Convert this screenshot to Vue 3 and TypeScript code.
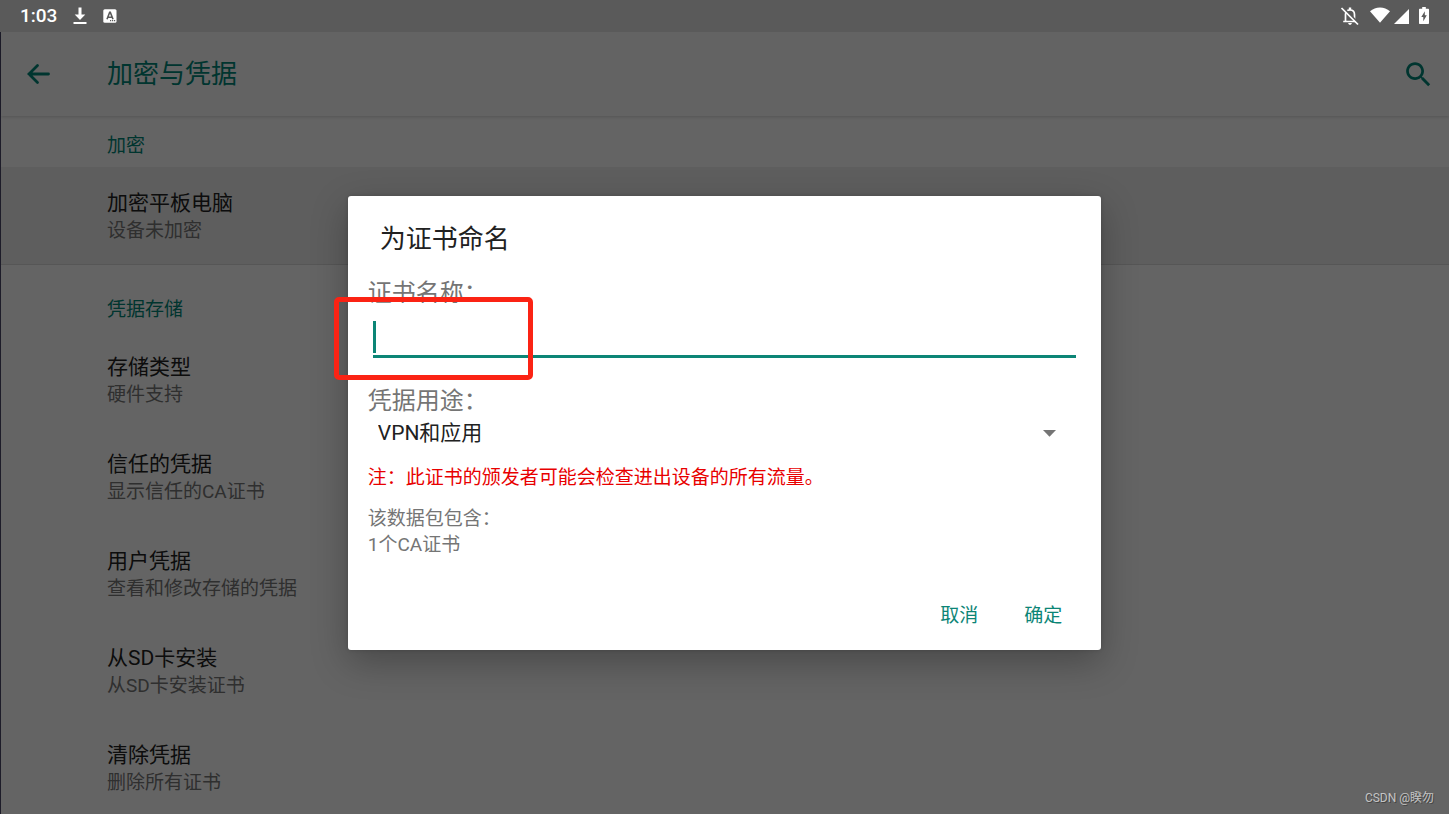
<script setup lang="ts">
import { ref } from 'vue'

interface Entry {
  title: string
  summary: string
}

const entries: Entry[] = [
  { title: '存储类型', summary: '硬件支持' },
  { title: '信任的凭据', summary: '显示信任的CA证书' },
  { title: '用户凭据', summary: '查看和修改存储的凭据' },
  { title: '从SD卡安装', summary: '从SD卡安装证书' },
  { title: '清除凭据', summary: '删除所有证书' },
]

const certName = ref('')
const usage = ref('vpn')
</script>

<template>
  <div class="screen">
    <header class="status">
      <div class="status-group">
        <span class="clock">1:03</span>
        <svg class="download" width="14" height="18" viewBox="0 0 14 18" aria-hidden="true">
          <path d="M5.5 0.5h3v7h3.8L7 13 1.7 7.5h3.8z" fill="#fff" />
          <path d="M0.5 15h13v2h-13z" fill="#fff" />
        </svg>
        <svg class="app-badge" width="14" height="14" viewBox="0 0 14 14" aria-hidden="true">
          <rect x="0.3" y="0.3" width="13.2" height="13.4" rx="1.5" fill="#fff" />
          <path d="M4 10.3L6.7 3.3h0.6L10 10.3M5 8.2h4" fill="none" stroke="#5a5a5a" stroke-width="1.6" />
          <path d="M7 11.7h1.2M9 11.7h1.2M11 11.7h1.2" stroke="#5a5a5a" stroke-width="1.2" />
        </svg>
      </div>
      <div class="status-group">
        <svg width="20" height="20" viewBox="0 0 20 20" aria-hidden="true">
          <path d="M5.5 15V8.5C5.5 5.8 7.3 4 10 4s4.5 1.8 4.5 4.5V15M3.2 15.5h13.6" fill="none" stroke="#fff" stroke-width="1.7" />
          <path d="M8.8 1.6h2.4v2.5H8.8zM8.2 17h3.6c0 1-.8 1.8-1.8 1.8S8.2 18 8.2 17z" fill="#fff" />
          <path d="M2.6 1.2L19 17.6" stroke="#5a5a5a" stroke-width="2" />
          <path d="M1.5 2L18 18.5" stroke="#fff" stroke-width="1.7" />
        </svg>
        <svg class="wifi" width="20" height="18" viewBox="0 0 20 18" aria-hidden="true">
          <path d="M0 4.2C2.8 1.7 6.3 0.4 10 0.4s7.2 1.3 10 3.8L10 15.8z" fill="#fff" />
        </svg>
        <svg class="signal" width="15" height="15" viewBox="0 0 15 15" aria-hidden="true">
          <path d="M15 0v15H0z" fill="#fff" />
        </svg>
        <svg class="battery" width="10" height="18" viewBox="0 0 10 18" aria-hidden="true">
          <path d="M3.2 0h3.6v1.7H9c.6 0 1 .4 1 1V16c0 .6-.4 1-1 1H1c-.6 0-1-.4-1-1V2.7c0-.6.4-1 1-1h2.2z" fill="#fff" />
          <path d="M5.8 4.3v4h2L4.3 14.2V10H2.3z" fill="#5a5a5a" />
        </svg>
      </div>
    </header>

    <main class="settings">
      <div class="appbar">
        <button class="icon-button back" type="button" aria-label="返回">
          <svg width="26" height="24" viewBox="0 0 26 24" aria-hidden="true">
            <path d="M23.5 12H4M12.5 3.5L4 12l8.5 8.5" fill="none" stroke="currentColor" stroke-width="2.8" stroke-linecap="round" />
          </svg>
        </button>
        <h1>加密与凭据</h1>
        <button class="icon-button" type="button" aria-label="搜索">
          <svg width="33" height="33" viewBox="0 0 24 24" aria-hidden="true">
            <path fill="currentColor" d="M15.5 14h-.79l-.28-.27C15.41 12.59 16 11.11 16 9.5 16 5.91 13.09 3 9.5 3S3 5.91 3 9.5 5.91 16 9.5 16c1.61 0 3.09-.59 4.23-1.57l.27.28v.79l5 4.99L20.49 19l-4.99-5zm-6 0C7.01 14 5 11.99 5 9.5S7.01 5 9.5 5 14 7.01 14 9.5 11.99 14 9.5 14z" />
          </svg>
        </button>
      </div>

      <section>
        <h2>加密</h2>
        <div class="row active">
          <div class="row-title">加密平板电脑</div>
          <div class="row-summary">设备未加密</div>
        </div>
      </section>
      <section class="storage">
        <h2>凭据存储</h2>
        <div v-for="entry in entries" :key="entry.title" class="row">
          <div class="row-title">{{ entry.title }}</div>
          <div class="row-summary">{{ entry.summary }}</div>
        </div>
      </section>
    </main>

    <div class="scrim">
      <form class="dialog" role="dialog" aria-labelledby="dialog-title" @submit.prevent>
        <h3 id="dialog-title">为证书命名</h3>
        <label class="label name-label" for="cert-name">证书名称：</label>
        <div class="field">
          <input id="cert-name" v-model="certName" type="text" autocomplete="off" />
          <span class="caret"></span>
          <span class="marker"></span>
        </div>
        <label class="label usage-label" for="cert-usage">凭据用途：</label>
        <div class="picker">
          <select id="cert-usage" v-model="usage">
            <option value="vpn">VPN和应用</option>
            <option value="wlan">WLAN</option>
          </select>
          <svg width="13" height="7" viewBox="0 0 13 7" aria-hidden="true">
            <path d="M0 0h13L6.5 6.8z" fill="#757575" />
          </svg>
        </div>
        <p class="warning">注：此证书的颁发者可能会检查进出设备的所有流量。</p>
        <p class="contents">该数据包包含：<br />1个CA证书</p>
        <div class="actions">
          <button type="button">取消</button>
          <button type="submit">确定</button>
        </div>
      </form>
    </div>

    <div class="watermark">CSDN @睽勿</div>
  </div>
</template>

<style>
body {
  margin: 0;
  overflow: hidden;
}
</style>

<style scoped>
.screen {
  position: relative;
  box-sizing: border-box;
  height: 100vh;
  overflow: hidden;
  display: flex;
  flex-direction: column;
  background: #fafafa;
  font-family: Roboto, "Noto Sans CJK SC", sans-serif;
  color: #212121;
}
.screen * {
  box-sizing: border-box;
}
h1,
h2,
h3,
p {
  margin: 0;
  font-weight: 400;
}
button,
input,
select {
  font: inherit;
  border: 0;
  background: none;
  outline: none;
}
svg {
  display: block;
  flex: none;
}

.status {
  position: relative;
  z-index: 2;
  flex: none;
  display: flex;
  justify-content: space-between;
  height: 32px;
  padding: 0 20px;
  background: #5a5a5a;
  color: #fff;
}
.status-group {
  display: flex;
  align-items: center;
}
.clock {
  font-size: 19px;
  line-height: 32px;
  font-weight: 500;
}
.download,
.app-badge {
  margin-left: 16px;
}
.wifi {
  margin-left: 10px;
}
.signal {
  margin-left: 4px;
}
.battery {
  margin-left: 10px;
}

.settings {
  flex: 1;
  min-height: 0;
  border-left: 1px solid #4a4868;
}
.appbar {
  position: relative;
  display: flex;
  align-items: center;
  height: 84px;
  margin-bottom: 1px;
  padding: 0 14px 0 24px;
  color: #008577;
  background: #f7f7f7;
  box-shadow: 0 1px 3px rgba(0, 0, 0, 0.16);
}
.icon-button {
  padding: 0;
  color: inherit;
}
.back {
  width: 82px;
}
.appbar h1 {
  flex: 1;
  font-size: 26px;
  line-height: 36px;
}
h2 {
  padding: 15px 20px 7px 106px;
  font-size: 19px;
  line-height: 28px;
  color: #008577;
}
.storage h2 {
  padding-top: 31px;
}
.row {
  padding: 22px 20px 19px 106px;
}
.row.active {
  background: #ebebeb;
  border-bottom: 1px solid #d6d6d6;
}
.row-title {
  font-size: 21px;
  line-height: 28px;
}
.row-summary {
  font-size: 19px;
  line-height: 28px;
  color: #757575;
}

.scrim {
  position: absolute;
  inset: 0;
  padding-top: 32px;
  display: flex;
  align-items: center;
  justify-content: center;
  background: rgba(0, 0, 0, 0.6);
}
.dialog {
  width: 52%;
  padding: 25px 25px 19px 20px;
  border-radius: 3px;
  background: #fff;
  box-shadow: 0 12px 36px rgba(0, 0, 0, 0.28), 0 0 4px rgba(0, 0, 0, 0.15);
}
.dialog h3 {
  padding-left: 12px;
  font-size: 26px;
  line-height: 36px;
}
.label {
  display: block;
  font-size: 24px;
  line-height: 32px;
  color: #757575;
}
.name-label {
  margin-top: 20px;
}
.field {
  position: relative;
  margin: -6px 0 0 5px;
  background: #fff;
}
.field input {
  display: block;
  width: 100%;
  height: 55px;
  padding: 0 6px;
  font-size: 24px;
  caret-color: transparent;
  border-bottom: 3px solid #0c8576;
}
.caret {
  position: absolute;
  left: 0;
  top: 18px;
  width: 3px;
  height: 32px;
  background: #0c8576;
}
.marker {
  position: absolute;
  left: -39px;
  top: -6px;
  width: 199px;
  height: 83px;
  border: 5px solid #fb2314;
  border-radius: 5px;
  pointer-events: none;
}
.usage-label {
  margin-top: 27px;
}
.picker {
  display: grid;
  align-items: center;
}
.picker select,
.picker svg {
  grid-area: 1 / 1;
}
.picker select {
  appearance: none;
  width: 100%;
  height: 32px;
  padding: 0 10px;
  font-size: 21px;
  color: #212121;
}
.picker svg {
  justify-self: end;
  margin-right: 20px;
  pointer-events: none;
}
.warning {
  margin-top: 15px;
  font-size: 19px;
  line-height: 28px;
  color: #e80000;
}
.contents {
  margin-top: 14px;
  font-size: 19px;
  line-height: 26px;
  color: #757575;
}
.actions {
  display: flex;
  justify-content: flex-end;
  gap: 22px;
  margin-top: 37px;
  padding-right: 2px;
}
.actions button {
  height: 36px;
  padding: 0 12px;
  font-size: 19px;
  color: #0c8576;
}
.watermark {
  position: absolute;
  right: 15px;
  bottom: 8px;
  font-size: 12px;
  line-height: 16px;
  color: #c4c4c4;
  text-shadow: 1px 1px 0 #444;
}
</style>
